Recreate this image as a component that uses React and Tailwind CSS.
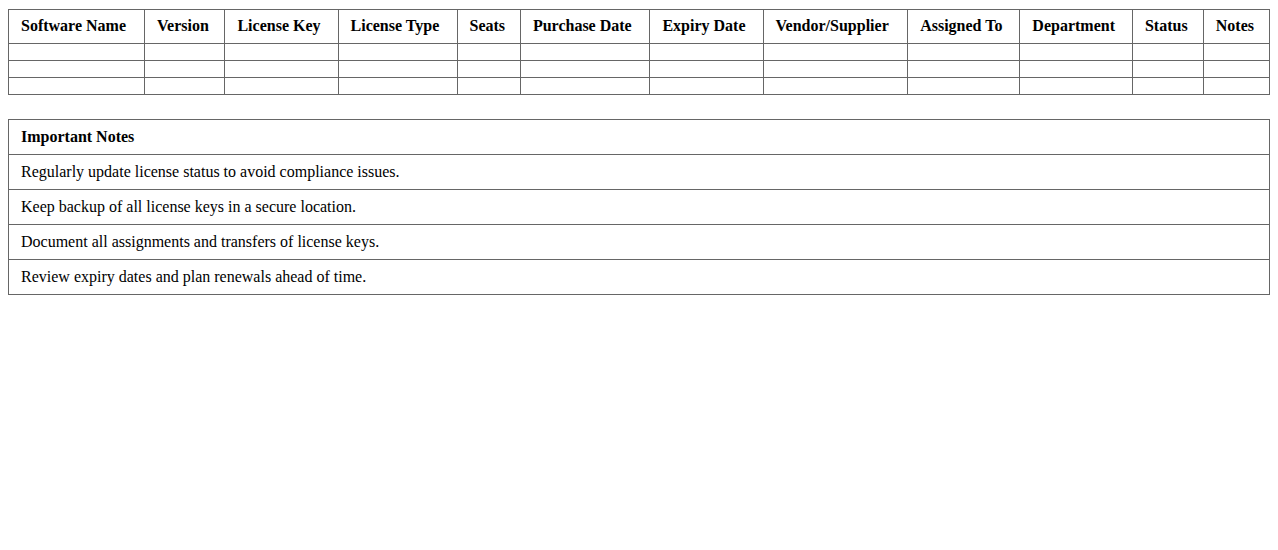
import React from "react";

const headers = [
  "Software Name",
  "Version",
  "License Key",
  "License Type",
  "Seats",
  "Purchase Date",
  "Expiry Date",
  "Vendor/Supplier",
  "Assigned To",
  "Department",
  "Status",
  "Notes",
];

const notes = [
  "Regularly update license status to avoid compliance issues.",
  "Keep backup of all license keys in a secure location.",
  "Document all assignments and transfers of license keys.",
  "Review expiry dates and plan renewals ahead of time.",
];

export default function App() {
  return (
    <div className="min-h-screen bg-white px-2 pt-[9px] text-[16px] text-black" style={{ fontFamily: '"Liberation Serif", "Times New Roman", serif' }}>
      <table className="w-full border-collapse">
        <thead>
          <tr>
            {headers.map((h) => (
              <th key={h} className="border border-[#666] px-3 pt-[7px] pb-[9px] text-left font-bold leading-[17px]">
                {h}
              </th>
            ))}
          </tr>
        </thead>
        <tbody>
          {[0, 1, 2].map((r) => (
            <tr key={r}>
              {headers.map((h) => (
                <td key={h} className="border border-[#666] px-3 py-2"></td>
              ))}
            </tr>
          ))}
        </tbody>
      </table>

      <table className="mt-6 w-full border-collapse">
        <thead>
          <tr>
            <th className="border border-[#666] px-3 py-2 text-left font-bold leading-[18px]">Important Notes</th>
          </tr>
        </thead>
        <tbody>
          {notes.map((n) => (
            <tr key={n}>
              <td className="border border-[#666] px-3 py-2 leading-[18px]">{n}</td>
            </tr>
          ))}
        </tbody>
      </table>
    </div>
  );
}
